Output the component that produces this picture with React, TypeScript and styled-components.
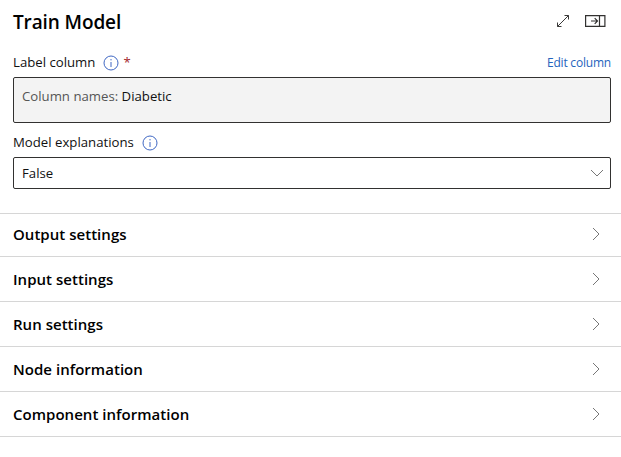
import React from "react";
import styled, { createGlobalStyle } from "styled-components";

const Global = createGlobalStyle`
  * { box-sizing: border-box; }
  body { margin: 0; background: #fff; color: #111; font-family: "Open Sans", "Noto Sans", sans-serif; }
`;
const Panel = styled.main`
  width: 621px;
  height: 457px;
  background: #fff;
  overflow: hidden;
`;
const Header = styled.header`
  display: flex;
  align-items: center;
  justify-content: space-between;
  height: 43px;
  padding: 0 15px 0 13px;
`;
const Title = styled.h1`
  margin: 0;
  font-size: 19px;
  font-weight: 600;
  line-height: 26px;
  letter-spacing: -0.12px;
  color: #000;
`;
const Actions = styled.div`
  display: flex;
  align-items: center;
  gap: 15px;
  margin-top: -2px;
`;
const IconButton = styled.button`
  display: flex;
  padding: 0;
  border: 0;
  background: none;
`;
const Form = styled.section`
  height: 170px;
  padding: 8px 10px 0 13px;
`;
const LabelRow = styled.div`
  display: flex;
  align-items: center;
  height: 22px;
  gap: 8px;
  font-size: 13.2px;
`;
const InfoIcon = styled.svg`
  position: relative;
  top: 1px;
`;
const Required = styled.span`
  margin-left: -4px;
  color: #a4262c;
`;
const EditLink = styled.a`
  margin-left: auto;
  color: #2564bd;
  font-size: 12px;
  letter-spacing: -0.2px;
`;
const Columns = styled.div`
  height: 46px;
  margin: 4px 0 8px;
  padding: 9px 8px;
  border: 1px solid #323130;
  border-radius: 2px;
  background: #f3f3f3;
  color: #555;
  font-size: 13.2px;
  line-height: 19px;
`;
const ColumnName = styled.span`
  color: #111;
`;
const Select = styled.div`
  display: flex;
  align-items: center;
  justify-content: space-between;
  height: 32px;
  margin-top: 4px;
  padding: 0 6px 0 8px;
  border: 1px solid #323130;
  border-radius: 2px;
  font-size: 13.2px;
`;
const Sections = styled.div`
  border-top: 1px solid #d6d6d6;
`;
const Section = styled.div`
  display: flex;
  align-items: center;
  justify-content: space-between;
  height: 45px;
  padding: 0 20px 0 13px;
  border-bottom: 1px solid #d6d6d6;
  color: #000;
  font-size: 15px;
  font-weight: 600;
  letter-spacing: 0.03px;
  &:first-child { height: 43px; padding-bottom: 2px; }
`;

const Info = () => (
  <InfoIcon width="16" height="16" viewBox="0 0 16 16" fill="none" stroke="#4068c4">
    <circle cx="8" cy="8" r="7" />
    <path d="M8 7v5M8 4v1.4" />
  </InfoIcon>
);
const Expand = () => (
  <svg width="14" height="14" viewBox="0 0 14 14" fill="none" stroke="#3b3a39" strokeWidth="1">
    <path d="M1.5 12.5l11-11M8.5 1.5h4v4M1.5 8.5v4h4" />
  </svg>
);
const Dock = () => (
  <svg width="21" height="12" viewBox="0 0 21 12" fill="none" stroke="#323130">
    <path d="M.6 .6h19.3v10.8H.6zM14.5 .5v11M6 6h6.5M9.7 3.2L12.5 6l-2.8 2.8" strokeWidth="1.2" />
  </svg>
);
const Down = () => (
  <svg width="14" height="8" viewBox="0 0 14 8" fill="none" stroke="#777">
    <path d="M1 1l6 6 6-6" />
  </svg>
);
const Right = () => (
  <svg width="9" height="14" viewBox="0 0 9 14" fill="none" stroke="#777">
    <path d="M1 1l6 6-6 6" />
  </svg>
);

const sections = ["Output settings", "Input settings", "Run settings", "Node information", "Component information"];

export default function App() {
  return (
    <>
      <Global />
      <Panel>
        <Header>
          <Title>Train Model</Title>
          <Actions>
            <IconButton aria-label="Expand"><Expand /></IconButton>
            <IconButton aria-label="Dock"><Dock /></IconButton>
          </Actions>
        </Header>
        <Form>
          <LabelRow>
            <span>Label column</span>
            <Info />
            <Required>*</Required>
            <EditLink>Edit column</EditLink>
          </LabelRow>
          <Columns>Column names: <ColumnName>Diabetic</ColumnName></Columns>
          <LabelRow>
            <span>Model explanations</span>
            <Info />
          </LabelRow>
          <Select>False<Down /></Select>
        </Form>
        <Sections>
          {sections.map(name => <Section key={name}>{name}<Right /></Section>)}
        </Sections>
      </Panel>
    </>
  );
}
